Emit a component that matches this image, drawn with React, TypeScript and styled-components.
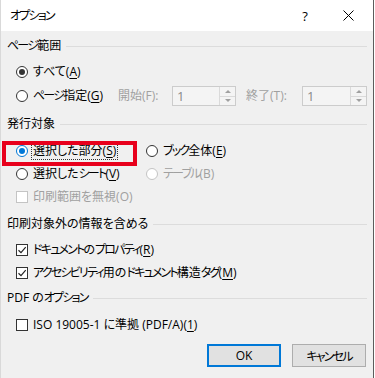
import styled, { createGlobalStyle, css } from 'styled-components';

const GlobalStyle = createGlobalStyle`
  html, body {
    margin: 0;
    padding: 0;
    background: #ffffff;
  }
  body {
    font-family: "Open Sans", "Noto Sans CJK JP", sans-serif;
    font-size: 12px;
    font-feature-settings: "palt";
    color: #000000;
  }
`;

const Window = styled.div`
  width: 374px;
  height: 378px;
  box-sizing: border-box;
  border-left: 1px solid #d9d9d9;
  border-right: 1px solid #5c5c5c;
  display: flex;
  flex-direction: column;
  background: #f0f0f0;
`;

const TitleBar = styled.div`
  height: 31px;
  flex: none;
  background: #ffffff;
  display: flex;
  align-items: center;
  padding-left: 9px;
`;

const Title = styled.div`
  flex: 1;
  line-height: 16px;
`;

const TitleButton = styled.div<{ $width: number }>`
  width: ${p => p.$width}px;
  height: 31px;
  display: flex;
  align-items: center;
  justify-content: center;
  font-size: 13px;
`;

const HelpButton = styled(TitleButton)`
  margin-right: 6px;
`;

const CloseButton = styled(TitleButton)`
  margin-right: 3px;
`;

const Body = styled.div`
  flex: 1;
  padding: 5px 6px 0 6px;
  display: flex;
  flex-direction: column;
`;

const GroupHeader = styled.div<{ $gap?: number }>`
  display: flex;
  align-items: center;
  height: 20px;
  line-height: 16px;
  margin-top: ${p => p.$gap ?? 0}px;

  &::after {
    content: "";
    flex: 1;
    height: 1px;
    margin-left: 5px;
    background: #dcdcdc;
  }
`;

const OptionList = styled.div<{ $top: number }>`
  display: flex;
  flex-direction: column;
  padding: ${p => p.$top}px 0 0 9px;
`;

const Row = styled.div<{ $height: number }>`
  height: ${p => p.$height}px;
  display: flex;
  align-items: center;
  line-height: 16px;
`;

const GridRow = styled(Row)`
  display: grid;
  grid-template-columns: 130px auto;
`;

const Choice = styled.div<{ $disabled?: boolean; $width?: number }>`
  display: inline-flex;
  align-items: center;
  gap: 5px;
  white-space: nowrap;
  color: ${p => (p.$disabled ? '#a0a0a0' : '#000000')};
  ${p => p.$width && css`width: ${p.$width}px;`}
`;

const Radio = styled.span<{ $checked?: boolean; $focus?: boolean; $disabled?: boolean }>`
  position: relative;
  width: 12px;
  height: 12px;
  flex: none;
  box-sizing: border-box;
  border-radius: 50%;
  background: #ffffff;
  border: 1px solid ${p => (p.$disabled ? '#c4c4c4' : p.$focus ? '#0078d7' : '#333333')};

  ${p =>
    p.$checked &&
    css`
      &::after {
        content: "";
        position: absolute;
        left: 2px;
        top: 2px;
        width: 6px;
        height: 6px;
        border-radius: 50%;
        background: ${p.$focus ? '#0078d7' : '#333333'};
      }
    `}
`;

const Box = styled.span<{ $disabled?: boolean }>`
  width: 12px;
  height: 12px;
  flex: none;
  box-sizing: border-box;
  background: #ffffff;
  border: 1px solid ${p => (p.$disabled ? '#c4c4c4' : '#333333')};
  display: flex;
  align-items: center;
  justify-content: center;
`;

const Kana = styled.span`
  letter-spacing: -1.8px;
`;

const Key = styled.span`
  text-decoration: underline;
  text-underline-offset: 2px;
`;

const FocusText = styled.span`
  margin-left: -2px;
  padding: 0 1px;
  border: 1px dotted #333333;
`;

const HighlightCell = styled.div`
  position: relative;
  display: flex;
  align-items: center;
`;

const Highlight = styled.div`
  position: absolute;
  left: -14px;
  top: -1px;
  width: 135px;
  height: 25px;
  box-sizing: border-box;
  border: 4px solid #e8001c;
  pointer-events: none;
`;

const SpinLabel = styled.span<{ $width: number; $gap?: number }>`
  width: ${p => p.$width}px;
  margin-left: ${p => p.$gap ?? 0}px;
  color: #a0a0a0;
  white-space: nowrap;
`;

const Spin = styled.div<{ $width: number }>`
  width: ${p => p.$width}px;
  height: 20px;
  box-sizing: border-box;
  border: 1px solid #cccccc;
  background: #f4f4f4;
  display: flex;
`;

const SpinValue = styled.div`
  flex: 1;
  padding-left: 4px;
  line-height: 18px;
  font-size: 13px;
  color: #8a8a8a;
`;

const SpinButtons = styled.div`
  width: 15px;
  border-left: 1px solid #dadada;
  display: flex;
  flex-direction: column;
`;

const SpinArrow = styled.div<{ $down?: boolean }>`
  flex: 1;
  display: flex;
  align-items: center;
  justify-content: center;
  ${p => !p.$down && css`border-bottom: 1px solid #dadada;`}

  &::after {
    content: "";
    border-left: 3px solid transparent;
    border-right: 3px solid transparent;
    ${p =>
      p.$down
        ? css`border-top: 3px solid #a0a0a0;`
        : css`border-bottom: 3px solid #a0a0a0;`}
  }
`;

const Footer = styled.div`
  display: flex;
  justify-content: flex-end;
  gap: 11px;
  margin-top: 7px;
  padding-right: 1px;
`;

const Button = styled.button<{ $primary?: boolean }>`
  width: 74px;
  height: 23px;
  box-sizing: border-box;
  padding: 0;
  margin: 0;
  font-family: inherit;
  font-size: 12px;
  font-feature-settings: "palt";
  color: #000000;
  background: #e1e1e1;
  border: ${p => (p.$primary ? '2px solid #0078d7' : '1px solid #adadad')};
`;

// katakana runs are set tighter, like the narrow kana of the UI font
const KATAKANA = /([\u30A0-\u30FF]+)/;

function Jp({ text }: { text: string }) {
  return (
    <>
      {text.split(KATAKANA).map((part, i) => (i % 2 === 1 ? <Kana key={i}>{part}</Kana> : part))}
    </>
  );
}

function Label({ text, hotkey, plain }: { text: string; hotkey: string; plain?: boolean }) {
  return (
    <span>
      <Jp text={text} />({plain ? hotkey : <Key>{hotkey}</Key>})
    </span>
  );
}

function CheckMark() {
  return (
    <svg width="10" height="10" viewBox="0 0 10 10">
      <path d="M1.5 5.2 L4 7.6 L8.7 2.2" fill="none" stroke="#222" strokeWidth="1.2" />
    </svg>
  );
}

function CloseIcon() {
  return (
    <svg width="11" height="11" viewBox="0 0 11 11">
      <path d="M0.5 0.5 L10.5 10.5 M10.5 0.5 L0.5 10.5" stroke="#000" strokeWidth="1" />
    </svg>
  );
}

function SpinBox({ value, width }: { value: string; width: number }) {
  return (
    <Spin $width={width}>
      <SpinValue>{value}</SpinValue>
      <SpinButtons>
        <SpinArrow />
        <SpinArrow $down />
      </SpinButtons>
    </Spin>
  );
}

export default function App() {
  return (
    <>
      <GlobalStyle />
      <Window>
        <TitleBar>
          <Title>
            <Jp text="オプション" />
          </Title>
          <HelpButton $width={30}>?</HelpButton>
          <CloseButton $width={44}>
            <CloseIcon />
          </CloseButton>
        </TitleBar>
        <Body>
          <GroupHeader>
            <Jp text="ページ範囲" />
          </GroupHeader>
          <OptionList $top={4}>
            <Row $height={24}>
              <Choice>
                <Radio $checked />
                <Label text="すべて" hotkey="A" />
              </Choice>
            </Row>
            <Row $height={24}>
              <Choice $width={102}>
                <Radio />
                <Label text="ページ指定" hotkey="G" />
              </Choice>
              <SpinLabel $width={54}>開始(F):</SpinLabel>
              <SpinBox value="1" width={64} />
              <SpinLabel $width={56} $gap={10}>終了(T):</SpinLabel>
              <SpinBox value="1" width={65} />
            </Row>
          </OptionList>

          <GroupHeader $gap={6}>発行対象</GroupHeader>
          <OptionList $top={5}>
            <GridRow $height={23}>
              <HighlightCell>
                <Choice>
                  <Radio $checked $focus />
                  <FocusText>
                    <Label text="選択した部分" hotkey="S" />
                  </FocusText>
                </Choice>
                <Highlight />
              </HighlightCell>
              <Choice>
                <Radio />
                <Label text="ブック全体" hotkey="E" />
              </Choice>
            </GridRow>
            <GridRow $height={23}>
              <Choice>
                <Radio />
                <Label text="選択したシート" hotkey="V" />
              </Choice>
              <Choice $disabled>
                <Radio $disabled />
                <Label text="テーブル" hotkey="B" plain />
              </Choice>
            </GridRow>
            <Row $height={23}>
              <Choice $disabled>
                <Box $disabled />
                <Label text="印刷範囲を無視" hotkey="O" plain />
              </Choice>
            </Row>
          </OptionList>

          <GroupHeader $gap={6}>印刷対象外の情報を含める</GroupHeader>
          <OptionList $top={4}>
            <Row $height={23}>
              <Choice>
                <Box>
                  <CheckMark />
                </Box>
                <Label text="ドキュメントのプロパティ" hotkey="R" />
              </Choice>
            </Row>
            <Row $height={23}>
              <Choice>
                <Box>
                  <CheckMark />
                </Box>
                <Label text="アクセシビリティ用のドキュメント構造タグ" hotkey="M" />
              </Choice>
            </Row>
          </OptionList>

          <GroupHeader $gap={4}>
            <Jp text="PDF のオプション" />
          </GroupHeader>
          <OptionList $top={5}>
            <Row $height={24}>
              <Choice>
                <Box />
                <Label text="ISO 19005-1 に準拠 (PDF/A)" hotkey="1" />
              </Choice>
            </Row>
          </OptionList>

          <Footer>
            <Button $primary>OK</Button>
            <Button>
              <Jp text="キャンセル" />
            </Button>
          </Footer>
        </Body>
      </Window>
    </>
  );
}
